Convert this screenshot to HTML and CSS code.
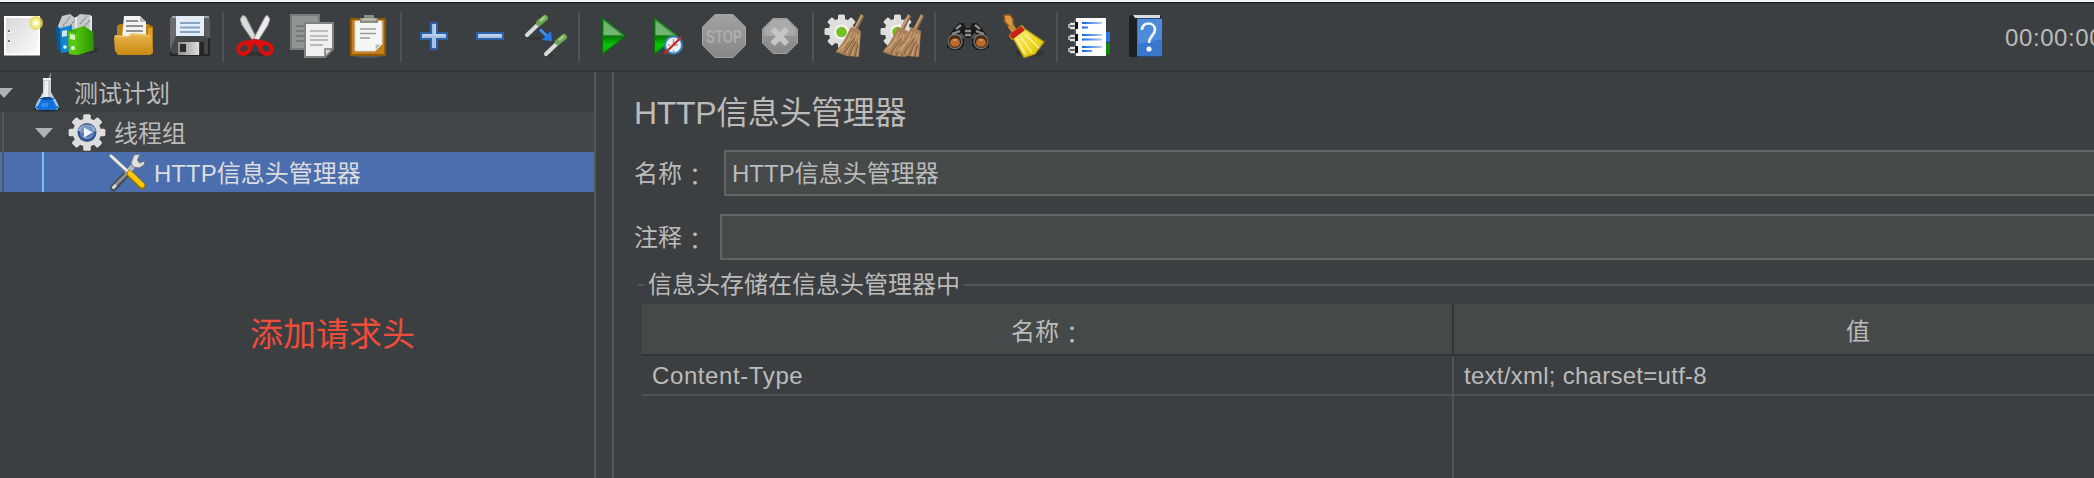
FILE: index.html
```html
<!DOCTYPE html>
<html lang="zh-CN">
<head>
<meta charset="utf-8">
<title>HTTP信息头管理器</title>
<link rel="stylesheet" href="styles.css">
</head>
<body>
<svg class="defs" width="0" height="0" aria-hidden="true">
  <defs>
    <linearGradient id="paper" x1="0" y1="0" x2="1" y2="1"><stop offset="0" stop-color="#d8d8d8"/><stop offset="1" stop-color="#fbfbfb"/></linearGradient>
    <linearGradient id="gold" x1="0" y1="0" x2="0" y2="1"><stop offset="0" stop-color="#e8b550"/><stop offset="1" stop-color="#c98a10"/></linearGradient>
    <linearGradient id="lime" x1="0" y1="0" x2="1" y2="0"><stop offset="0" stop-color="#2f9a04"/><stop offset=".4" stop-color="#4fc00a"/><stop offset="1" stop-color="#2c9204"/></linearGradient>
    <linearGradient id="go" x1="0" y1="0" x2="0" y2="1"><stop offset="0" stop-color="#3f8f3f"/><stop offset=".45" stop-color="#4f9f4f"/><stop offset=".52" stop-color="#067a06"/><stop offset=".75" stop-color="#06c806"/><stop offset="1" stop-color="#0a9a0a"/></linearGradient>
    <linearGradient id="grey" x1="0" y1="0" x2="0" y2="1"><stop offset="0" stop-color="#a2a2a2"/><stop offset="1" stop-color="#868686"/></linearGradient>
    <linearGradient id="straw" x1="0" y1="0" x2="1" y2="1"><stop offset="0" stop-color="#fbf08a"/><stop offset=".6" stop-color="#ecd71c"/><stop offset="1" stop-color="#c9ad08"/></linearGradient>
    <linearGradient id="ink" x1="0" y1="0" x2="1" y2="0"><stop offset="0" stop-color="#0f62e6"/><stop offset="1" stop-color="#b4cdf6"/></linearGradient>
    <linearGradient id="metal" x1="0" y1="0" x2="1" y2="0"><stop offset="0" stop-color="#8e8e8e"/><stop offset="1" stop-color="#dedede"/></linearGradient>
    <g id="cog">
      <g fill="#dededc">
        <rect x="-3.500" y="-17" width="7" height="34" rx="1.5"/>
        <rect x="-3.500" y="-17" width="7" height="34" rx="1.5" transform="rotate(45)"/>
        <rect x="-3.500" y="-17" width="7" height="34" rx="1.5" transform="rotate(90)"/>
        <rect x="-3.500" y="-17" width="7" height="34" rx="1.5" transform="rotate(135)"/>
        <circle r="13"/>
      </g>
    </g>
    <g id="besom">
      <path d="M38.5 1 31 16" stroke="#8f6a48" stroke-width="4"/>
      <path d="M38 1 30.5 15" stroke="#c9a27c" stroke-width="1.6"/>
      <path d="M27 13 37 17 35 43 23 42 11.500 38 19 28Z" fill="#a98058"/>
      <path d="M28 18 17 38M31 19 22 40M33 20 28 42M35 20 33 42M27 24 14 37" stroke="#c9a277" stroke-width="1.3"/>
      <path d="M30 24 20 40M32 27 25 42M34 30 31 43" stroke="#79583a" stroke-width="1"/>
    </g>
  </defs>
</svg>

<header class="toolbar">
  <div class="group">
    <svg class="tool" viewBox="0 0 44 44"><path d="M4 2H40V41.500H4Z" fill="#fff"/><path d="M6 4H38V39.500H6Z" fill="url(#paper)"/><path d="M8 16h3v3H8zM8 26h3v3H8z" fill="#fff"/><path d="M8 16h2v2H8zM8 26h2v2H8z" fill="#777"/><circle cx="36" cy="9" r="7" fill="#e9dc55" opacity=".8"/><circle cx="36" cy="9" r="4.500" fill="#f5ef9a"/><circle cx="36" cy="9" r="2.200" fill="#fff"/></svg>
    <svg class="tool" viewBox="0 0 44 44"><ellipse cx="30" cy="36" rx="13" ry="4" fill="#2c2e2f" opacity=".6"/><path d="M2 12 6 2 14 0 19 4 24 0 35 1 36 20 5 20Z" fill="#c6c8ca"/><path d="M7 12 14 3M12 14 20 5M24 10 31 2M28 13 34 6" stroke="#8b8e90" stroke-width="1.600" stroke-dasharray="2 1.200"/><path d="M20 3V16M35 2V20" stroke="#dfe9f2" stroke-width="2"/><path d="M0 12 5 15V38L1 34Z" fill="#065a9c"/><path d="M4 14 16 11 17 37 5 39Z" fill="#1385cf"/><path d="M6 17l5-1v6l-5 1z" fill="#cfe6f6"/><circle cx="9" cy="33" r="1.800" fill="#dff"/><path d="M12 17 28 12 37 18 38 36 22 41 13 40Z" fill="url(#lime)"/><path d="M12 17 21 20V41L13 40Z" fill="#58c814"/><path d="M14 20 19 21V26L14 25Z" fill="#d6f2bd"/><circle cx="17" cy="34" r="2" fill="#e6f7d5"/></svg>
    <svg class="tool" viewBox="0 0 44 44"><path d="M5 12 8 10H36L41 13V39H5Z" fill="#b87f10"/><path d="M36 14H40V38H36Z" fill="#dca12c"/><path d="M12 2H28L34 8V24H10Z" fill="#f3f3f3"/><path d="M28 2 34 8H28Z" fill="#bcbcbc"/><path d="M14 7H26M14 12H31M14 17H31" stroke="#8f9192" stroke-width="1.800"/><path d="M3 21 16 22 20 19 39 21 41 39 38 41H6L3 37 2 24Z" fill="url(#gold)"/><path d="M3 22 16 23 20 20 38 22" fill="none" stroke="#f0cb7c" stroke-width="1.200"/></svg>
    <svg class="tool" viewBox="0 0 44 44"><path d="M4 2H40L42 4V41H6L2 37V4Z" fill="#454749"/><path d="M2 4 8 2V22L2 36Z" fill="#6b6b6e"/><path d="M36 2 42 4V26L36 22Z" fill="#5b5b5e"/><path d="M4 3H9M36 3H41" stroke="#a2a5a7" stroke-width="2"/><path d="M3 38V41H41V24" fill="none" stroke="#242526" stroke-width="2"/><path d="M8 2H36V22H8Z" fill="#e2edf6"/><path d="M12 9H32M12 13.500H32M12 18H32" stroke="#86a5c5" stroke-width="1.800"/><path d="M10 28H31V41H10Z" fill="url(#metal)"/><path d="M12 30H18V38H12Z" fill="#2c2c2e"/><path d="M32 28H36V41H32Z" fill="#252627"/></svg>
  </div>
  <div class="group">
    <svg class="tool" viewBox="0 0 44 44"><ellipse cx="22" cy="40" rx="16" ry="2.500" fill="#303233"/><path d="M9 1 6 5 8 11 19 27 23 25 12 3Z" fill="#dadcda" stroke="#888b89"/><path d="M33 1 36 5 34 11 24 27 19.500 25 31 3Z" fill="#ececea" stroke="#949694"/><g fill="none" stroke="#d9100e" stroke-width="4.200"><ellipse cx="10" cy="34.500" rx="6" ry="5" transform="rotate(-35 10 34.500)"/><ellipse cx="32" cy="34.500" rx="6" ry="5" transform="rotate(35 32 34.500)"/><path d="M12 29 21 27 30 29M16 33 20 27M26 33 22 27"/></g></svg>
    <svg class="tool" viewBox="0 0 44 44"><path d="M1 1H29V35H1Z" fill="#919596" stroke="#777b7c" stroke-width="2"/><path d="M6 12H22M6 17H22M6 22H22M6 27H22" stroke="#6d7172" stroke-width="1.600"/><path d="M15 9H43V35L35 43H15Z" fill="#f0f0f0" stroke="#80837f" stroke-width="2"/><path d="M20 17H38M20 22H38M20 26H38M20 31H33" stroke="#aaa" stroke-width="1.700"/><path d="M43 35H35V43Z" fill="#d6d6d6" stroke="#777" stroke-width="1.500"/></svg>
    <svg class="tool" viewBox="0 0 44 44"><ellipse cx="22" cy="42" rx="15" ry="2" fill="#545656"/><path d="M5 5H39V41H5Z" fill="#c17f1e" stroke="#8f5905" stroke-width="2"/><path d="M9 7H36V30L29 37H9Z" fill="#f5f5f5" stroke="#d8d8d8"/><path d="M36 30H29V37Z" fill="#b9b9b9" stroke="#fff"/><path d="M14 15H30M14 19.500H30M14 24H24" stroke="#9c9c9c" stroke-width="1.700"/><path d="M14 4H18V1H28V4H32V9H14Z" fill="#8d8e82"/><path d="M16 5.500H30" stroke="#c2c2b8" stroke-width="2"/></svg>
  </div>
  <div class="group">
    <svg class="tool" viewBox="0 0 44 44"><path d="M19 9H25V19H35V25H25V35H19V25H9V19H19Z" fill="#a5c0e2" stroke="#2d62a8" stroke-width="2"/><path d="M21 11H23V21H33M11 21H21" fill="none" stroke="#c6d7ed" stroke-width="1.500"/></svg>
    <svg class="tool" viewBox="0 0 44 44"><path d="M9 19H35V25H9Z" fill="#a9c3e4" stroke="#2d62a8" stroke-width="2"/><path d="M11 21H33" stroke="#c9d9ee" stroke-width="1.500"/></svg>
    <svg class="tool" viewBox="0 0 44 44"><path d="M5 24.500H17M24 42H30" stroke="#2b2d2e" stroke-width="3" opacity=".6"/><path d="M3 21 14 10.500M22 40 33 29.500" stroke="#d9dbd8" stroke-width="4" stroke-linecap="round"/><path d="M15 9 21 4M34 28 40 23" stroke="#6ba553" stroke-width="6" stroke-linecap="round"/><path d="M16 7 21 3M35 26 40 22" stroke="#9dd07c" stroke-width="2.600"/><path d="M16 15.500 24 23" stroke="#3f8df5" stroke-width="3"/><path d="M27 17 28 27 18 26Z" fill="#1f79f2"/></svg>
  </div>
  <div class="group">
    <svg class="tool" viewBox="0 0 44 44"><path d="M12.500 4 35.500 22 12.500 40Z" fill="url(#go)" stroke="#087008"/><path d="M14 7 31 21H14Z" fill="#9bd09b" opacity=".5"/></svg>
    <svg class="tool" viewBox="0 0 44 44"><path d="M8.500 4 32 22 8.500 40Z" fill="url(#go)" stroke="#087008"/><path d="M10 7 27 21H10Z" fill="#9bd09b" opacity=".5"/><circle cx="27.500" cy="31" r="8.500" fill="#e9f1f5" stroke="#3a83c0" stroke-width="2"/><path d="M27.500 25V31H32M22 31H24M27.500 36V38" fill="none" stroke="#999" stroke-width="1.300"/><path d="M18 40 35.500 23" stroke="#c9282a" stroke-width="2.400"/></svg>
    <svg class="tool" viewBox="0 0 44 44"><path d="M13 0.500H31L43.500 13V31L31 43.500H13L0.500 31V13Z" fill="url(#grey)" stroke="#a3a3a3"/><text class="stop-text" x="22" y="29" text-anchor="middle" textLength="36" lengthAdjust="spacingAndGlyphs">STOP</text></svg>
    <svg class="tool" viewBox="0 0 44 44"><path d="M15 4.500H29L39.500 15V29L29 39.500H15L4.500 29V15Z" fill="url(#grey)" stroke="#a0a0a0"/><path d="M6 16 15 6H29L38 16V22H6Z" fill="#b4b4b4" opacity=".6"/><path d="M14.500 15 29 30M29 15 14.500 30" stroke="#c6c6c6" stroke-width="6"/></svg>
  </div>
  <div class="group">
    <svg class="tool" viewBox="0 0 44 44"><use href="#cog" x="17.500" y="17.500"/><circle cx="17.500" cy="18" r="7.500" fill="#f3f3f1"/><circle cx="17.500" cy="18" r="5.300" fill="#74c022"/><use href="#besom"/></svg>
    <svg class="tool" viewBox="0 0 44 44"><use href="#cog" x="17.500" y="17.500"/><circle cx="17.500" cy="18" r="7.500" fill="#f3f3f1"/><circle cx="17.500" cy="18" r="5.300" fill="#74c022"/><use href="#besom" x="-9"/><use href="#besom" x="4"/></svg>
  </div>
  <div class="group">
    <svg class="tool" viewBox="0 0 44 44"><path d="M8 14 13 9H18L20 14H24L26 9H31L36 14 43 26V33L38 36H30L26 31V24H18V31L14 36H6L1 33V26Z" fill="#1b1b1b"/><path d="M10 15 15 11M29 11 34 15M6 20 14 17M30 17 38 20M19 17H25M19 21H25" stroke="#8c8c8c" stroke-width="2.400"/><path d="M14 20 18 24M30 20 26 24" stroke="#555" stroke-width="3"/><circle cx="9" cy="27.500" r="7" fill="#48260f" stroke="#777" stroke-width="1.300"/><circle cx="35" cy="27.500" r="7" fill="#48260f" stroke="#777" stroke-width="1.300"/><ellipse cx="9" cy="28.500" rx="5" ry="4.300" fill="#b8692b"/><ellipse cx="35" cy="28.500" rx="5" ry="4.300" fill="#b8692b"/><path d="M7 26H11M33 26H37" stroke="#dda06c" stroke-width="1.600"/></svg>
    <svg class="tool" viewBox="0 0 44 44"><ellipse cx="28" cy="39" rx="15" ry="4" fill="#2c2e2f" opacity=".6"/><path d="M2 1 8 1 11 5V12L7 12 3 8Z" fill="#d99a40" stroke="#93591a" stroke-width="1.500"/><path d="M8 11 13 18" stroke="#c98b36" stroke-width="6"/><path d="M7 21 20 11 23 15 10 26Z" fill="#e3c923" stroke="#a68c0b"/><path d="M11 24 23 15 42 28 33 40 22 43.500Z" fill="url(#straw)" stroke="#b49a0c" stroke-width="1.200"/><path d="M15 25 23 40M19 23 30 39M23 20 37 34" stroke="#fcf6b5" stroke-width="1.200"/><path d="M9 23 21 14" stroke="#c9201b" stroke-width="5.500"/></svg>
  </div>
  <div class="group">
    <svg class="tool" viewBox="0 0 44 44"><path d="M36 18H42V28H36Z" fill="#2a75e4"/><path d="M36 29H42V40H36Z" fill="#108a0b"/><path d="M8 4H38V42H8Z" fill="#fdfdfd"/><path d="M7 5V42" stroke="#777" stroke-width="1"/><path d="M7 8H10V15H7ZM7 20H10V27H7ZM7 32H10V39H7Z" fill="#111"/><path d="M2 10H7M2 14H7M2 22H7M2 26H7M2 34H7M2 38H7" stroke="#e2e2e2" stroke-width="2.600"/><path d="M1 10V14M1 22V26M1 34V38" stroke="#aaa" stroke-width="2"/><path d="M14 8H34V10H14ZM14 12.500H20V14.500H14ZM14 20H34V22H14ZM14 24.500H34V26.500H14ZM14 32H34V34H14ZM14 36H24V38H14Z" fill="url(#ink)"/></svg>
    <svg class="tool" viewBox="0 0 44 44"><path d="M5 2 8 1H36L38 4V43H6L5 41Z" fill="#1e1f20"/><path d="M9 1H36V4H11Z" fill="#dadde0"/><path d="M13 4.500H38V42.500H13Z" fill="#3878cc"/><path d="M14 5H38V25L14 30Z" fill="#5b97e0" opacity=".65"/><path d="M18 16C18 7 31 8 31 15.500C31 21 25 22 25 29" stroke="#f4f7fb" stroke-width="2.600" fill="none"/><circle cx="25" cy="35" r="2.600" fill="#f4f7fb"/></svg>
  </div>
  <div class="clock">00:00:00</div>
</header>

<main class="workspace">
  <nav class="tree">
    <div class="node root">
      <svg class="twisty-cut" viewBox="5 0 13 10"><path d="M0 0H18L9 10Z" fill="#afb1b3"/></svg>
      <svg class="node-icon" viewBox="0 0 40 40"><ellipse cx="19" cy="37" rx="13" ry="2.500" fill="#232526"/><path d="M21 7 23 1.500" stroke="#8b8d8f" stroke-width="1.500"/><path d="M15 6H23V20L31 35 29 38H9L7 35 15 20Z" fill="#c9ced4"/><path d="M15 6H23V8H15ZM17 9H20V24L14 34H11L16 21Z" fill="#eef0f2"/><path d="M12 26H26L30.500 35 28 38H10L7.500 35Z" fill="#1173da"/><path d="M15 25H23L24 28H14Z" fill="#0c4b9c"/><path d="M12 27 8.500 34M26 27 29.500 34" stroke="#9dc7f2" stroke-width="2.400"/><path d="M14 31H20V35H13Z" fill="#2f8cf0"/></svg>
      <span class="node-label">测试计划</span>
    </div>
    <div class="node group-node">
      <svg class="twisty" viewBox="0 0 18 10"><path d="M0 0H18L9 10Z" fill="#afb1b3"/></svg>
      <svg class="node-icon" viewBox="0 0 40 40"><use href="#cog" transform="translate(19 20.500) scale(1.080)"/><circle cx="19" cy="20.500" r="9.500" fill="#35578f"/><path d="M10 19A9.500 9.500 0 0 1 28 19Z" fill="#a9b8ce"/><circle cx="19" cy="20" r="7" fill="#7996c4"/><path d="M12 21H26A8 8 0 0 1 12 21Z" fill="#5379b4"/><path d="M16 15.500 24.500 20.500 16 25.500Z" fill="#f4f6fa"/></svg>
      <span class="node-label">线程组</span>
    </div>
    <div class="node leaf selected">
      <svg class="node-icon" viewBox="0 0 40 40"><path d="M5.500 36 21 19" stroke="#444849" stroke-width="6.500" stroke-linecap="round"/><path d="M5.500 35 22 18.500" stroke="#8d9091" stroke-width="3" stroke-linecap="round"/><path d="M4.500 36.500 8 33" stroke="#d8dada" stroke-width="3"/><path d="M18 22 27 12" stroke="#b9bcbc" stroke-width="5"/><path d="M26 3 32 2 29.500 8 31.500 11 37 9 36 13 31 16 25 15 23 11Z" fill="#dfe1e0" stroke="#74777a"/><path d="M3 4 20 20" stroke="#83888a" stroke-width="4"/><path d="M2 3 20 19.500" stroke="#ededeb" stroke-width="2.400"/><path d="M22 22 34 34" stroke="#8c7203" stroke-width="7" stroke-linecap="round"/><path d="M22 21.500 34 33" stroke="#fbc904" stroke-width="5" stroke-linecap="round"/></svg>
      <span class="node-label">HTTP信息头管理器</span>
    </div>
    <p class="note">添加请求头</p>
  </nav>

  <section class="editor">
    <h1 class="title">HTTP信息头管理器</h1>
    <div class="field name-field">
      <label class="field-label">名称<span class="colon">：</span></label>
      <div class="input">HTTP信息头管理器</div>
    </div>
    <div class="field comment-field">
      <label class="field-label">注释<span class="colon">：</span></label>
      <div class="input"></div>
    </div>
    <div class="legend">
      <span class="legend-text">信息头存储在信息头管理器中</span>
    </div>
    <div class="table">
      <div class="cell head">名称<span class="colon">：</span></div>
      <div class="cell head">值</div>
      <div class="cell key">Content-Type</div>
      <div class="cell value">text/xml; charset=utf-8</div>
      <div class="cell rest"></div>
      <div class="cell rest"></div>
    </div>
  </section>
</main>
</body>
</html>
```

FILE: styles.css
```css
* {
  box-sizing: border-box;
}

body {
  margin: 0;
  width: 2094px;
  height: 478px;
  overflow: hidden;
  display: flex;
  flex-direction: column;
  background: #3c3f41;
  color: #bbbbbb;
  font: 24px/40px "Liberation Sans", "Noto Sans CJK SC", sans-serif;
  white-space: nowrap;
}

svg {
  display: block;
  flex: none;
  fill: none;
}

.defs {
  position: absolute;
}

.toolbar {
  flex: none;
  height: 72px;
  display: flex;
  align-items: flex-start;
  padding-top: 9px;
  border-top: 2px solid #f2f3f5;
  border-bottom: 2px solid #323436;
  box-shadow: inset 0 1px #17191b, inset 0 2px #34373a;
}

.group {
  height: 50px;
  margin-top: 1px;
  display: flex;
  gap: 12px;
  padding: 2px 10px 0;
  border-right: 2px solid #515151;
}

.group:first-child {
  padding-left: 0;
}

.group:nth-child(7) {
  border-right: 0;
}

.tool {
  width: 44px;
  height: 44px;
}

.stop-text {
  font: bold 18px "Liberation Sans", sans-serif;
  fill: #acacac;
}

.clock {
  margin-left: 827px;
  margin-top: 7px;
  letter-spacing: 0.6px;
}

.workspace {
  flex: 1;
  display: flex;
}

.tree {
  flex: none;
  width: 596px;
  border-right: 2px solid #555555;
}

.node {
  position: relative;
  height: 40px;
  display: flex;
  align-items: center;
}

.node-icon {
  width: 40px;
  height: 40px;
}

.node-label {
  margin-left: 6px;
  padding-top: 4px;
}

.twisty,
.twisty-cut {
  width: 18px;
  height: 10px;
  margin: 2px 15px 0 35px;
}

.twisty-cut {
  width: 13px;
  margin-left: 0;
}

.group-node {
  background: #414547;
}

.group-node::before,
.leaf::before {
  content: "";
  position: absolute;
  left: 2px;
  top: 0;
  width: 2px;
  height: 40px;
  background: #555555;
}

.leaf {
  padding-left: 108px;
}

.leaf::after {
  content: "";
  position: absolute;
  left: 42px;
  top: 0;
  width: 2px;
  height: 40px;
  background: #78bcff;
}

.selected {
  background: #4b6eaf;
  color: #dddddd;
}

.note {
  margin: 123px 0 0 250px;
  font-size: 33px;
  color: #f04c3a;
}

.editor {
  flex: 1;
  min-width: 0;
  margin-left: 16px;
  border-left: 2px solid #555555;
  padding: 21px 0 0 20px;
  display: flex;
  flex-direction: column;
}

.title {
  margin: 0 0 17px;
  font-size: 32px;
  font-weight: 400;
  line-height: 40px;
  letter-spacing: -0.35px;
}

.field {
  flex: none;
  display: flex;
  height: 46px;
  line-height: 48px;
  margin-bottom: 18px;
}

.field-label {
  width: 90px;
}

.colon {
  margin: 0 -7px 0 7px;
  line-height: 0;
  vertical-align: -2px;
}

.comment-field {
  margin-bottom: 4px;
}

.comment-field .field-label {
  width: 86px;
}

.input {
  flex: 1;
  padding-left: 6px;
  line-height: 44px;
  border: 2px solid #646464;
  border-right: 0;
  background: #45494a;
}

.legend {
  flex: none;
  height: 40px;
  display: flex;
  align-items: center;
  gap: 4px;
  padding-left: 4px;
}

.legend-text {
  padding-top: 2px;
}

.legend::before,
.legend::after {
  content: "";
  height: 2px;
  width: 6px;
  margin-top: 2px;
  background: #555555;
}

.legend::after {
  flex: 1;
}

.table {
  flex: 1;
  margin-left: 8px;
  display: grid;
  grid-template-columns: 812px 1fr;
  grid-template-rows: 52px 40px 1fr;
}

.cell {
  border-right: 2px solid #515151;
}

.cell:nth-child(even) {
  border-right: 0;
}

.head {
  line-height: 56px;
  text-align: center;
  background: #45494a;
  border-right-color: #323436;
  border-bottom: 2px solid #323436;
}

.head:nth-child(2) {
  text-align: left;
  padding-left: 392px;
}

.key,
.value {
  padding-left: 10px;
  border-bottom: 2px solid #515151;
}

.key {
  letter-spacing: 0.6px;
}

.value {
  letter-spacing: 0.27px;
}
```
